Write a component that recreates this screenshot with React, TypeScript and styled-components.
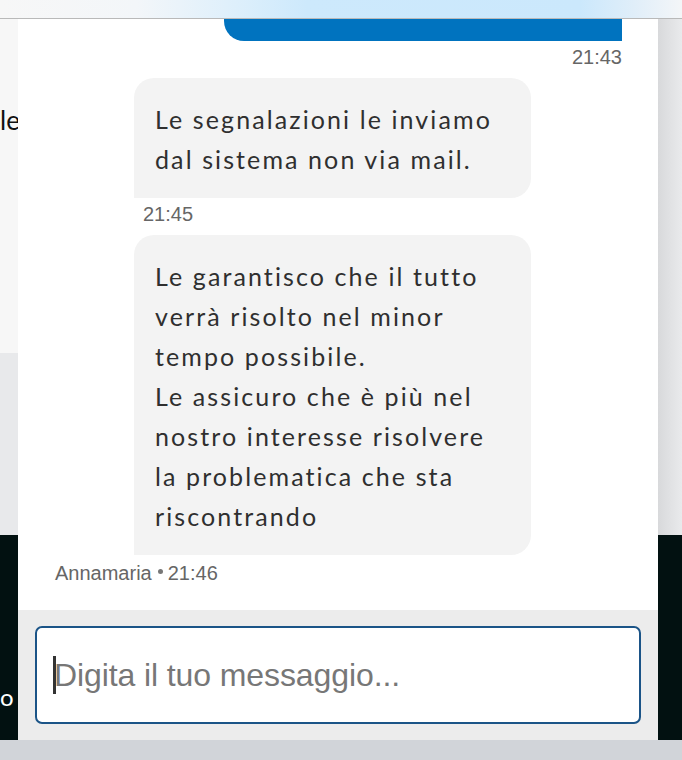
import styled, { createGlobalStyle } from "styled-components";

const GlobalStyle = createGlobalStyle`
  html, body {
    margin: 0;
    padding: 0;
    background: #d1d4d9;
  }
  * {
    box-sizing: border-box;
  }
`;

interface Message {
  id: string;
  author: "user" | "agent";
  lines: string[];
  time: string;
  name?: string;
}

const messages: Message[] = [
  { id: "m1", author: "user", lines: [""], time: "21:43" },
  {
    id: "m2",
    author: "agent",
    lines: ["Le segnalazioni le inviamo", "dal sistema non via mail."],
    time: "21:45",
  },
  {
    id: "m3",
    author: "agent",
    lines: [
      "Le garantisco che il tutto",
      "verrà risolto nel minor",
      "tempo possibile.",
      "Le assicuro che è più nel",
      "nostro interesse risolvere",
      "la problematica che sta",
      "riscontrando",
    ],
    time: "21:46",
    name: "Annamaria",
  },
];

const Screen = styled.div`
  position: relative;
  width: 682px;
  height: 760px;
  overflow: hidden;
  display: flex;
  flex-direction: column;
  font-family: "Liberation Sans", Arial, sans-serif;
`;

const TopBar = styled.div`
  height: 19px;
  flex-shrink: 0;
  border-bottom: 1px solid #b9b9b9;
  background: linear-gradient(
    to right,
    #f7f7f7 0%,
    #f3f6f9 20%,
    #e0f0fb 33%,
    #cde9fc 45%,
    #cbe8fc 85%,
    #e0eef9 93%,
    #f4f6f8 100%
  );
`;

const PageSection = styled.div<{ $bg: string; $height: number }>`
  height: ${({ $height }) => $height}px;
  flex-shrink: 0;
  background: ${({ $bg }) => $bg};
  display: flex;
  justify-content: space-between;
`;

const LeftText = styled.div<{ $color: string; $size: number; $top: number }>`
  width: 18px;
  overflow: hidden;
  white-space: nowrap;
  padding-top: ${({ $top }) => $top}px;
  color: ${({ $color }) => $color};
  font-size: ${({ $size }) => $size}px;
  font-family: Lato, "Liberation Sans", sans-serif;
  line-height: 1;
`;

const SideShade = styled.div`
  width: 24px;
  background: linear-gradient(to right, #d8d9db, #e9eaec);
`;

const BottomStrip = styled.div`
  flex: 1;
  background: #d1d4d9;
`;

const Panel = styled.div`
  position: absolute;
  left: 18px;
  top: 19px;
  width: 640px;
  height: 721px;
  background: #fff;
  display: flex;
  flex-direction: column;
`;

const Thread = styled.div`
  flex: 1;
  overflow: hidden;
  display: flex;
  flex-direction: column;
  justify-content: flex-end;
  padding: 0 36px 27px 37px;
`;

const Row = styled.div<{ $mine: boolean }>`
  display: flex;
  flex-direction: column;
  align-items: ${({ $mine }) => ($mine ? "flex-end" : "flex-start")};
`;

const UserBubble = styled.div`
  width: 398px;
  height: 140px;
  background: #0073bf;
  border-radius: 20px 20px 0 20px;
`;

const AgentBubble = styled.div`
  width: 397px;
  margin-left: 79px;
  padding: 21px 10px 19px 21px;
  background: #f3f3f3;
  border-radius: 20px 20px 20px 0;
  color: #2f2f2f;
  font-family: Lato, "Noto Sans", sans-serif;
  font-size: 25px;
  line-height: 40px;
  letter-spacing: 2.1px;
  white-space: nowrap;
`;

const Time = styled.div<{ $indent: number }>`
  margin: 6px 0 11px ${({ $indent }) => $indent}px;
  color: #666;
  font-size: 20px;
  line-height: 20px;
`;

const Meta = styled.div`
  display: flex;
  align-items: center;
  margin-top: 8px;
  color: #666;
  font-size: 20px;
  line-height: 20px;
`;

const Dot = styled.span`
  display: inline-block;
  width: 5px;
  height: 5px;
  margin: 0 5px 4px 6px;
  border-radius: 50%;
  background: #777;
`;

const Composer = styled.div`
  height: 130px;
  flex-shrink: 0;
  padding: 16px 17px;
  background: #ececec;
`;

const InputBox = styled.div`
  height: 98px;
  display: flex;
  align-items: center;
  padding-left: 16px;
  background: #fff;
  border: 2px solid #1b5487;
  border-radius: 7px;
`;

const Caret = styled.span`
  width: 3px;
  height: 38px;
  margin-right: -2px;
  background: #333;
`;

const Placeholder = styled.span`
  color: #777;
  font-size: 32px;
  letter-spacing: -0.1px;
`;

const App = () => {
  return (
    <>
      <GlobalStyle />
      <Screen>
        <TopBar />
        <PageSection $bg="#f7f7f7" $height={334}>
          <LeftText $color="#111" $size={26} $top={88}>
            le
          </LeftText>
          <SideShade />
        </PageSection>
        <PageSection $bg="#e8e9eb" $height={182}>
          <LeftText $color="#111" $size={26} $top={0} />
          <SideShade />
        </PageSection>
        <PageSection $bg="#021111" $height={205}>
          <LeftText $color="#fff" $size={24} $top={150}>
            o
          </LeftText>
        </PageSection>
        <BottomStrip />

        <Panel>
          <Thread>
            {messages.map((m) =>
              m.author === "user" ? (
                <Row key={m.id} $mine>
                  <UserBubble />
                  <Time $indent={0}>{m.time}</Time>
                </Row>
              ) : (
                <Row key={m.id} $mine={false}>
                  <AgentBubble>
                    {m.lines.map((line) => (
                      <div key={line}>{line}</div>
                    ))}
                  </AgentBubble>
                  {m.name ? (
                    <Meta>
                      {m.name}
                      <Dot />
                      {m.time}
                    </Meta>
                  ) : (
                    <Time $indent={88}>{m.time}</Time>
                  )}
                </Row>
              )
            )}
          </Thread>
          <Composer>
            <InputBox>
              <Caret />
              <Placeholder>Digita il tuo messaggio...</Placeholder>
            </InputBox>
          </Composer>
        </Panel>
      </Screen>
    </>
  );
};

export default App;
